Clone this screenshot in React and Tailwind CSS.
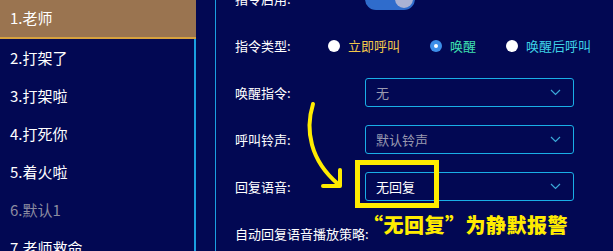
import React from 'react';

const items = [
  { label: '1.老师', active: true },
  { label: '2.打架了' },
  { label: '3.打架啦' },
  { label: '4.打死你' },
  { label: '5.着火啦' },
  { label: '6.默认1', muted: true },
  { label: '7.老师救命' },
];

const Chevron = () => (
  <svg width="11" height="7" viewBox="0 0 11 7" fill="none">
    <path d="M1 1l4.5 4.5L10 1" stroke="#3aa8d8" strokeWidth="1.2" />
  </svg>
);

const SelectBox = ({ value, bright }) => (
  <div className="ml-[37px] w-[209px] h-[29px] shrink-0 border border-[#19aee6] rounded-[3px] flex items-center justify-between pl-[10px] pr-[12px]">
    <span className={bright ? 'text-white text-[13px]' : 'text-[#9a9ab0] text-[13px]'}>{value}</span>
    <Chevron />
  </div>
);

const Radio = ({ checked, label, color }) => (
  <div className="flex items-center mr-[30px] shrink-0">
    {checked ? (
      <span className="w-[12px] h-[12px] rounded-full bg-[#3d8ee8] flex items-center justify-center">
        <span className="w-[4px] h-[4px] rounded-full bg-white" />
      </span>
    ) : (
      <span className="w-[12px] h-[12px] rounded-full bg-white" />
    )}
    <span className={`ml-[8px] text-[13px] whitespace-nowrap ${color}`}>{label}</span>
  </div>
);

const Row = ({ label, children }) => (
  <div className="h-[47px] flex items-center">
    <span className="w-[93px] shrink-0 whitespace-nowrap text-white text-[13px]">{label}</span>
    {children}
  </div>
);

export default function App() {
  return (
    <div
      className="relative w-[613px] h-[251px] overflow-hidden bg-[#020853] flex"
      style={{ fontFamily: '"Noto Sans CJK SC", "Microsoft YaHei", sans-serif' }}
    >
      {/* Sidebar */}
      <div className="w-[196px] shrink-0 flex flex-col">
        {items.map((it) =>
          it.active ? (
            <div
              key={it.label}
              className="h-[39px] shrink-0 bg-[#9a7450] border-b-2 border-[#d7a23e] flex items-center pl-[10px] text-[15px] text-white"
            >
              {it.label}
            </div>
          ) : (
            <div
              key={it.label}
              className={`h-[38px] shrink-0 border-r-2 border-[#1a9fe0] flex items-center pl-[10px] text-[15px] ${
                it.muted ? 'text-[#8c8ca0]' : 'text-white'
              }`}
            >
              {it.label}
            </div>
          )
        )}
      </div>

      {/* Content panel */}
      <div className="ml-[19px] flex-1 min-w-0 border-l border-[#1a9fe0] pl-[19px]">
        <div className="mt-[-25px] flex flex-col">
          <Row label="指令启用:">
            <div className="ml-[37px] w-[50px] h-[22px] rounded-full bg-[#2f6ccc] flex items-center justify-end pr-[2px]">
              <span className="w-[18px] h-[18px] rounded-full bg-[#aab2d4]" />
            </div>
          </Row>
          <Row label="指令类型:">
            <div className="flex items-center">
              <Radio label="立即呼叫" color="text-[#f2c84a]" />
              <Radio checked label="唤醒" color="text-[#3fe0b0]" />
              <Radio label="唤醒后呼叫" color="text-[#3ed2e6]" />
            </div>
          </Row>
          <Row label="唤醒指令:">
            <SelectBox value="无" />
          </Row>
          <Row label="呼叫铃声:">
            <SelectBox value="默认铃声" />
          </Row>
          <Row label="回复语音:">
            <SelectBox value="无回复" bright />
          </Row>
          <Row label="自动回复语音播放策略:" />
        </div>
      </div>

      {/* Annotations */}
      <svg className="absolute left-0 top-0 pointer-events-none" width="613" height="251">
        <path
          d="M313 104 C305 130 310 160 338 184"
          stroke="#ffec00"
          strokeWidth="4"
          fill="none"
          strokeLinecap="round"
        />
        <path
          d="M340 170 L340 186 L323 186"
          stroke="#ffec00"
          strokeWidth="4"
          fill="none"
          strokeLinecap="round"
          strokeLinejoin="round"
        />
      </svg>
      <div className="absolute left-[355px] top-[160px] w-[84px] h-[48px] border-[5px] border-[#ffec00]" />
      <div className="absolute left-[363px] top-[211px] text-[20px] font-black text-[#ffec00] tracking-[0.5px] leading-[28px] whitespace-nowrap">
        “无回复”为静默报警
      </div>
    </div>
  );
}
